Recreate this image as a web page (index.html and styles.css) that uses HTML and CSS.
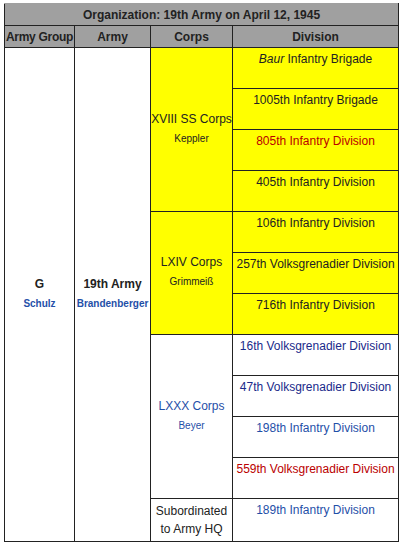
FILE: index.html
```html
<!DOCTYPE html>
<html>
<head>
<meta charset="utf-8">
<link rel="stylesheet" href="styles.css">
</head>
<body>
<table class="org">
  <colgroup>
    <col class="c-ag"><col class="c-army"><col class="c-corps"><col class="c-div">
  </colgroup>
  <tr class="title-row"><th colspan="4">Organization: 19th Army on April 12, 1945</th></tr>
  <tr class="head-row"><th>Army Group</th><th>Army</th><th>Corps</th><th>Division</th></tr>
  <tr>
    <td rowspan="12" class="mid bold"><span>G</span><span class="sub link">Schulz</span></td>
    <td rowspan="12" class="mid bold"><span>19th Army</span><span class="sub link">Brandenberger</span></td>
    <td rowspan="4" class="mid yel"><span>XVIII SS Corps</span><span class="sub">Keppler</span></td>
    <td class="div yel"><i>Baur</i> Infantry Brigade</td>
  </tr>
  <tr><td class="div yel">1005th Infantry Brigade</td></tr>
  <tr><td class="div yel red">805th Infantry Division</td></tr>
  <tr><td class="div yel">405th Infantry Division</td></tr>
  <tr>
    <td rowspan="3" class="mid yel"><span>LXIV Corps</span><span class="sub">Grimmeiß</span></td>
    <td class="div yel">106th Infantry Division</td>
  </tr>
  <tr><td class="div yel">257th Volksgrenadier Division</td></tr>
  <tr><td class="div yel">716th Infantry Division</td></tr>
  <tr>
    <td rowspan="4" class="mid link"><span>LXXX Corps</span><span class="sub">Beyer</span></td>
    <td class="div visited">16th Volksgrenadier Division</td>
  </tr>
  <tr><td class="div visited">47th Volksgrenadier Division</td></tr>
  <tr><td class="div link">198th Infantry Division</td></tr>
  <tr><td class="div red">559th Volksgrenadier Division</td></tr>
  <tr class="last-row">
    <td class="mid hq">Subordinated to Army HQ</td>
    <td class="div link">189th Infantry Division</td>
  </tr>
</table>
</body>
</html>
```

FILE: styles.css
```css
html, body {
  margin: 0;
  padding: 0;
  background: #ffffff;
}
body {
  padding: 3px 5px 0 4px;
  font-family: "Liberation Sans", Arial, sans-serif;
  font-size: 12px;
  line-height: 18px;
  color: #222222;
}
.org {
  border-collapse: collapse;
  width: 394px;
  table-layout: fixed;
  border: 1px solid #8a8a8a;
}
.c-ag { width: 70px; }
.c-army { width: 76px; }
.c-corps { width: 82px; }
.c-div { width: 166px; }
.org th, .org td {
  border: 1px solid #222222;
  padding: 1px 0;
  text-align: center;
}
.org tr:first-child th { border-top-color: #a0a0a0; }
.org th {
  background: #a0a0a0;
  font-weight: bold;
  color: #222222;
  white-space: nowrap;
}
.title-row th { height: 21px; padding: 0; }
.head-row th { height: 21px; padding: 0; }
.head-row th:first-child {
  letter-spacing: -0.3px;
  overflow: hidden;
}
.org td {
  height: 38px;
}
.org .last-row td {
  height: 40px;
}
.org td.div {
  vertical-align: top;
  padding: 2px 0 0 0;
  white-space: nowrap;
}
.mid {
  vertical-align: middle;
}
.mid span {
  display: block;
}
.mid .sub {
  font-size: 10px;
  line-height: 22px;
}
.bold { font-weight: bold; }
.yel { background: #ffff00; }
.red { color: #ba0000; }
.link { color: #1f4fa8; }
.visited { color: #1a2a8a; }
.hq {
  line-height: 18px;
  padding: 2px 0;
}
```
